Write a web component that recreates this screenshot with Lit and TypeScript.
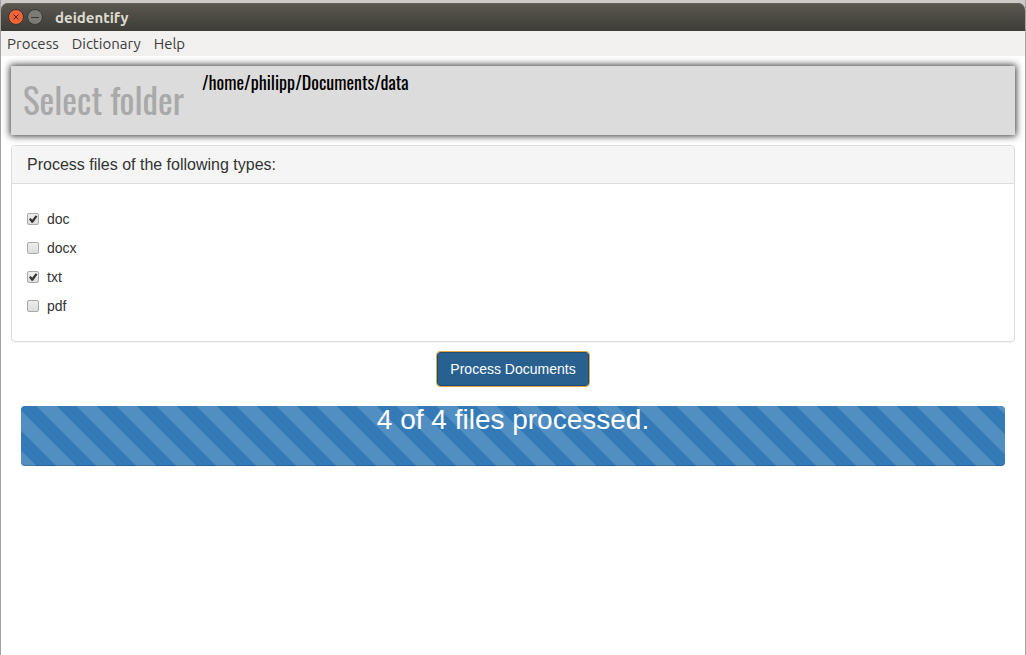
import { LitElement, html, css, svg } from "lit";
import { customElement, property, state } from "lit/decorators.js";
import { styleMap } from "lit/directives/style-map.js";

@customElement("title-bar")
class TitleBar extends LitElement {
  @property() heading = "";

  static styles = css`
    :host {
      display: block;
      background: #cdcac7;
      padding-top: 3px;
    }
    .bar {
      display: flex;
      align-items: center;
      gap: 3px;
      height: 28px;
      padding-left: 7px;
      border-radius: 7px 7px 0 0;
      background: linear-gradient(#5a584f, #3d3c37);
      box-shadow: inset 0 1px #65645b;
    }
    button {
      display: block;
      width: 16px;
      height: 16px;
      padding: 0;
      border: 0;
      background: none;
    }
    svg {
      display: block;
    }
    h1 {
      margin: 0 0 0 9px;
      padding-top: 2px;
      font: bold 15px/22px Ubuntu, "Noto Sans", sans-serif;
      color: #dfdbd2;
    }
  `;

  render() {
    const glyph = (fill: string, edge: string, mark: string, stroke: string) => svg`
      <circle cx="8" cy="8" r="7.5" fill=${fill} stroke=${edge}></circle>
      <path d=${mark} stroke=${stroke} stroke-width="1" fill="none"></path>`;
    return html`
      <header class="bar">
        <button aria-label="Close">
          <svg width="16" height="16">${glyph("#ee6338", "#383530", "M5.5 5.5l5 5M10.5 5.5l-5 5", "#5b2414")}</svg>
        </button>
        <button aria-label="Minimise">
          <svg width="16" height="16">${glyph("#7c7b75", "#383733", "M4 8.5h8", "#3b3a36")}</svg>
        </button>
        <h1>${this.heading}</h1>
      </header>
    `;
  }
}

@customElement("striped-progress")
class StripedProgress extends LitElement {
  @property({ type: Number }) done = 0;
  @property({ type: Number }) total = 1;

  static styles = css`
    :host {
      display: block;
      height: 60px;
      border-radius: 4px;
      background: #f5f5f5;
    }
    .fill {
      height: 100%;
      border-radius: 4px;
      background: linear-gradient(
          45deg,
          rgba(255, 255, 255, 0.15) 25%,
          transparent 25%,
          transparent 50%,
          rgba(255, 255, 255, 0.15) 50%,
          rgba(255, 255, 255, 0.15) 75%,
          transparent 75%
        )
        16px 0 / 40px 40px #337ab7;
      box-shadow: inset 0 -1px rgba(0, 0, 0, 0.15);
      color: #fff;
      font-size: 28px;
      line-height: 28px;
      text-align: center;
    }
  `;

  render() {
    const width = `${(this.done / this.total) * 100}%`;
    return html`
      <div
        class="fill"
        role="progressbar"
        aria-valuenow=${this.done}
        aria-valuemax=${this.total}
        style=${styleMap({ width })}
      >
        ${this.done} of ${this.total} files processed.
      </div>
    `;
  }
}

@customElement("app-root")
class AppRoot extends LitElement {
  @state() private types = [
    { name: "doc", on: true },
    { name: "docx", on: false },
    { name: "txt", on: true },
    { name: "pdf", on: false },
  ];

  static styles = css`
    :host {
      display: flex;
      flex-direction: column;
      box-sizing: border-box;
      min-height: 100vh;
      border: solid #a3a2a0;
      border-width: 0 1px;
      background: #fff;
      color: #333;
      font: 14px/20px "Liberation Sans", Arial, sans-serif;
    }
    nav {
      display: flex;
      gap: 13px;
      height: 25px;
      padding: 0 6px;
      background: #f2f1f0;
    }
    nav button {
      padding: 0;
      border: 0;
      background: none;
      color: #3c3c3c;
      font: 15px/26px Ubuntu, "Noto Sans", sans-serif;
    }
    main {
      display: flex;
      flex-direction: column;
      gap: 10px;
      padding: 10px;
    }
    .folder {
      display: flex;
      align-items: flex-start;
      gap: 18px;
      padding: 6px 12px 9px;
      background: #dcdcdc;
      box-shadow: 0 0 7px 1px #333;
      font-family: Oswald, "Roboto Condensed", "Liberation Sans Narrow", sans-serif;
    }
    .folder button {
      padding: 0;
      border: 0;
      background: none;
      color: #a9a9a9;
      font: inherit;
      font-size: 35px;
      line-height: 54px;
    }
    .folder output {
      color: #000;
      font-size: 18px;
      line-height: 20px;
    }
    .panel {
      border: 1px solid #ddd;
      border-radius: 4px;
      box-shadow: 0 1px 1px rgba(0, 0, 0, 0.05);
    }
    .panel h2 {
      margin: 0;
      padding: 10px 15px;
      border-bottom: 1px solid #ddd;
      border-radius: 3px 3px 0 0;
      background: #f5f5f5;
      font-size: 16px;
      font-weight: normal;
      line-height: 17px;
    }
    .types {
      display: flex;
      flex-direction: column;
      align-items: flex-start;
      gap: 9px;
      padding: 25px 15px;
    }
    .types label {
      display: flex;
      align-items: center;
      gap: 8px;
    }
    .types input {
      appearance: none;
      box-sizing: border-box;
      width: 12px;
      height: 12px;
      margin: 0;
      border: 1px solid #aaa;
      border-radius: 2px;
      background: linear-gradient(#eee, #dcdcdc);
    }
    .types input:checked::before {
      content: "";
      display: block;
      height: 10px;
      background: #333;
      clip-path: polygon(10% 52%, 26% 40%, 42% 58%, 78% 12%, 94% 26%, 50% 88%, 36% 88%);
    }
    .run {
      align-self: center;
      padding: 6px 12px;
      border: 1px solid #204d74;
      border-radius: 3px;
      outline: 1px solid #e0a83c;
      background: #286090;
      color: #fff;
      font: inherit;
    }
    striped-progress {
      margin: 10px;
    }
  `;

  private toggle(name: string) {
    this.types = this.types.map((t) => (t.name === name ? { ...t, on: !t.on } : t));
  }

  render() {
    return html`
      <title-bar heading="deidentify"></title-bar>
      <nav>${["Process", "Dictionary", "Help"].map((m) => html`<button>${m}</button>`)}</nav>
      <main>
        <section class="folder">
          <button>Select folder</button>
          <output>/home/philipp/Documents/data</output>
        </section>
        <section class="panel">
          <h2>Process files of the following types:</h2>
          <div class="types">
            ${this.types.map(
              (t) => html`<label>
                <input type="checkbox" .checked=${t.on} @change=${() => this.toggle(t.name)} />${t.name}
              </label>`,
            )}
          </div>
        </section>
        <button class="run">Process Documents</button>
        <striped-progress done="4" total="4"></striped-progress>
      </main>
    `;
  }
}
